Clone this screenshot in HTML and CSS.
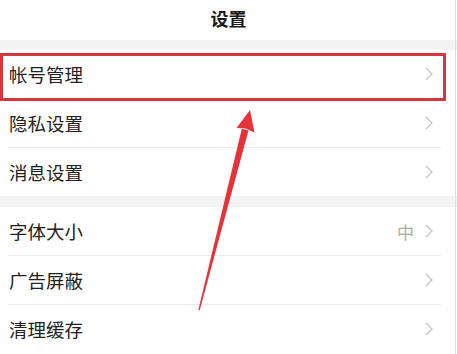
FILE: index.html
```html
<!DOCTYPE html>
<html lang="zh-CN">
<head>
<meta charset="utf-8">
<title>设置</title>
<link rel="stylesheet" href="styles.css">
</head>
<body>
<div class="page">
  <header class="topbar"><h1 class="title">设置</h1></header>
  <div class="gap gap-top"></div>
  <ul class="group">
    <li class="row"><span class="label">帐号管理</span><span class="right"><svg class="chev" viewBox="0 0 8 14"><polyline points="1,1 7,7 1,13"/></svg></span></li>
    <li class="row"><span class="label">隐私设置</span><span class="right"><svg class="chev" viewBox="0 0 8 14"><polyline points="1,1 7,7 1,13"/></svg></span></li>
    <li class="row"><span class="label">消息设置</span><span class="right"><svg class="chev" viewBox="0 0 8 14"><polyline points="1,1 7,7 1,13"/></svg></span></li>
  </ul>
  <div class="gap gap-mid"></div>
  <ul class="group">
    <li class="row"><span class="label">字体大小</span><span class="right"><span class="value">中</span><svg class="chev" viewBox="0 0 8 14"><polyline points="1,1 7,7 1,13"/></svg></span></li>
    <li class="row"><span class="label">广告屏蔽</span><span class="right"><svg class="chev" viewBox="0 0 8 14"><polyline points="1,1 7,7 1,13"/></svg></span></li>
    <li class="row"><span class="label">清理缓存</span><span class="right"><svg class="chev" viewBox="0 0 8 14"><polyline points="1,1 7,7 1,13"/></svg></span></li>
  </ul>
  <div class="highlight"></div>
  <svg class="arrow" viewBox="0 0 457 354" width="457" height="354">
    <polygon points="198.3,310 199.7,310.3 248.5,130.5 241.8,128.8"/>
    <polygon points="250,110 254.5,132.5 245.5,128.5 236.5,128"/>
  </svg>
  <div class="edge"></div>
</div>
</body>
</html>
```
FILE: styles.css
```css
html, body {
  margin: 0;
  padding: 0;
  background: #ffffff;
}
body {
  font-family: "Noto Sans CJK SC", "Noto Sans", sans-serif;
  color: #222222;
}
.page {
  position: relative;
  width: 457px;
  height: 354px;
  overflow: hidden;
  background: #ffffff;
}
.topbar {
  height: 40px;
  display: flex;
  align-items: center;
  justify-content: center;
}
.title {
  margin: 0;
  font-size: 18px;
  font-weight: 700;
  color: #1a1a1a;
  line-height: 1;
  transform: translateY(-2px);
}
.gap {
  background: #f3f3f3;
}
.gap-top {
  height: 10px;
}
.gap-mid {
  height: 11px;
}
.group {
  list-style: none;
  margin: 0;
  padding: 0;
}
.row {
  height: 48px;
  display: flex;
  align-items: center;
  justify-content: space-between;
  padding: 0 24px 0 9px;
  position: relative;
}
.group .row + .row {
  margin-top: 1px;
}
.group .row + .row::after {
  content: "";
  position: absolute;
  left: 8px;
  right: 16px;
  top: -1px;
  height: 1px;
  background: #ececec;
}
.label {
  font-size: 18.5px;
  line-height: 1;
  color: #222222;
}
.right {
  display: flex;
  align-items: center;
  gap: 11px;
}
.value {
  font-size: 17px;
  color: #ababab;
  line-height: 1;
}
.chev {
  width: 8px;
  height: 14px;
  display: block;
}
.chev polyline {
  fill: none;
  stroke: #c2c2c2;
  stroke-width: 1.2;
}
.highlight {
  position: absolute;
  left: 0;
  top: 53px;
  width: 440px;
  height: 42px;
  border: 3px solid #d8363d;
}
.arrow {
  position: absolute;
  left: 0;
  top: 0;
  pointer-events: none;
}
.arrow polygon {
  fill: #e8323a;
}
.edge {
  position: absolute;
  right: 1px;
  top: 0;
  width: 1px;
  height: 354px;
  background: #dedede;
}
```
